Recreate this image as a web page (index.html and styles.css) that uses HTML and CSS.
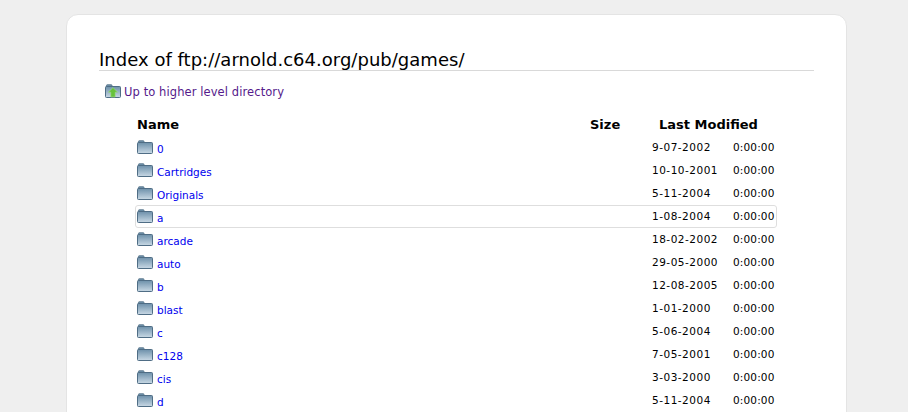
FILE: index.html
```html
<!DOCTYPE html>
<html>
<head>
<meta charset="utf-8">
<title>Index of ftp://arnold.c64.org/pub/games/</title>
<link rel="stylesheet" href="styles.css">
</head>
<body>
<svg class="defs" width="0" height="0">
  <defs>
    <linearGradient id="fg" x1="0" y1="0" x2="0" y2="1">
      <stop offset="0" stop-color="#6d90aa"/>
      <stop offset="1" stop-color="#c9d9e5"/>
    </linearGradient>
    <symbol id="folder" viewBox="0 0 16 14">
      <path d="M1.5 3V1.4Q1.5 .7 2.2 .7H6.3Q7 .7 7 1.4V3Z" fill="#6d90aa" stroke="#557389" stroke-width=".8"/>
      <rect x=".5" y="2.5" width="15" height="11" rx=".9" fill="url(#fg)" stroke="#4f6d85"/>
    </symbol>
  </defs>
</svg>
<main class="card">
  <h1 class="title">Index of ftp://arnold.c64.org/pub/games/</h1>
  <a class="up" href="#">
    <svg class="up-icon" viewBox="0 0 16 14"><use href="#folder"/><path d="M8 3.6L12.6 8.2H10.2V13H5.8V8.2H3.4Z" fill="#66c23c" stroke="#a5dd8a" stroke-width=".6"/></svg>
    Up to higher level directory
  </a>
  <div class="list">
    <div class="row head"><span class="name">Name</span><span class="size">Size</span><span class="modified">Last Modified</span></div>
    <div class="row"><a class="name" href="#"><svg class="folder"><use href="#folder"/></svg>0</a><span class="date">9-07-2002</span><span class="time">0:00:00</span></div>
    <div class="row"><a class="name" href="#"><svg class="folder"><use href="#folder"/></svg>Cartridges</a><span class="date">10-10-2001</span><span class="time">0:00:00</span></div>
    <div class="row"><a class="name" href="#"><svg class="folder"><use href="#folder"/></svg>Originals</a><span class="date">5-11-2004</span><span class="time">0:00:00</span></div>
    <div class="row hover"><a class="name" href="#"><svg class="folder"><use href="#folder"/></svg>a</a><span class="date">1-08-2004</span><span class="time">0:00:00</span></div>
    <div class="row"><a class="name" href="#"><svg class="folder"><use href="#folder"/></svg>arcade</a><span class="date">18-02-2002</span><span class="time">0:00:00</span></div>
    <div class="row"><a class="name" href="#"><svg class="folder"><use href="#folder"/></svg>auto</a><span class="date">29-05-2000</span><span class="time">0:00:00</span></div>
    <div class="row"><a class="name" href="#"><svg class="folder"><use href="#folder"/></svg>b</a><span class="date">12-08-2005</span><span class="time">0:00:00</span></div>
    <div class="row"><a class="name" href="#"><svg class="folder"><use href="#folder"/></svg>blast</a><span class="date">1-01-2000</span><span class="time">0:00:00</span></div>
    <div class="row"><a class="name" href="#"><svg class="folder"><use href="#folder"/></svg>c</a><span class="date">5-06-2004</span><span class="time">0:00:00</span></div>
    <div class="row"><a class="name" href="#"><svg class="folder"><use href="#folder"/></svg>c128</a><span class="date">7-05-2001</span><span class="time">0:00:00</span></div>
    <div class="row"><a class="name" href="#"><svg class="folder"><use href="#folder"/></svg>cis</a><span class="date">3-03-2000</span><span class="time">0:00:00</span></div>
    <div class="row"><a class="name" href="#"><svg class="folder"><use href="#folder"/></svg>d</a><span class="date">5-11-2004</span><span class="time">0:00:00</span></div>
  </div>
</main>
</body>
</html>
```
FILE: styles.css
```css
* { box-sizing: border-box; }
html, body { height: 100%; overflow: hidden; }
body {
  margin: 0;
  padding: 14px 61px 0 66px;
  background: #efefef;
  font-family: "DejaVu Sans", sans-serif;
  color: #000;
}
.defs { display: block; height: 0; }
.card {
  background: #fff;
  border: 1px solid #e4e4e4;
  border-radius: 12px;
  padding: 31px 32px 0 32px;
  height: 420px;
  overflow: hidden;
}
.title {
  margin: 0;
  padding-top: 2px;
  font-size: 18px;
  line-height: 24px;
  font-weight: 400;
  letter-spacing: .02px;
  border-bottom: 1px solid #d9d9d9;
  height: 25px;
}
.up {
  display: flex;
  align-items: center;
  margin: 12px 0 0 6px;
  height: 18px;
  font-size: 11.5px;
  letter-spacing: .09px;
  color: #551a8b;
  text-decoration: none;
  gap: 3px;
}
.up-icon { width: 16px; height: 14px; margin-bottom: 2px; }
.list { margin: 13px 0 0 36px; width: 642px; }
.row {
  display: flex;
  align-items: center;
  height: 23px;
  border: 1px solid transparent;
  border-radius: 3px;
  padding-left: 1px;
  font-size: 10.5px;
}
.row.hover { border-color: #dedede; }
.row.head { font-size: 13px; font-weight: 700; height: 22px; margin-top: -1px; margin-bottom: 1px; }
.name {
  display: flex;
  align-items: center;
  gap: 4px;
  width: 453px;
  font-size: 10.5px;
  color: #0000ee;
  text-decoration: none;
}
.head .name { font-size: 13px; color: #000; }
.size { width: 69px; }
.folder { width: 16px; height: 14px; margin-bottom: 4px; }
a.name { width: 515px; padding-top: 2px; }
.date { width: 81px; letter-spacing: .5px; margin-bottom: 2px; }
.time { width: 42px; letter-spacing: .15px; margin-bottom: 2px; }
```
